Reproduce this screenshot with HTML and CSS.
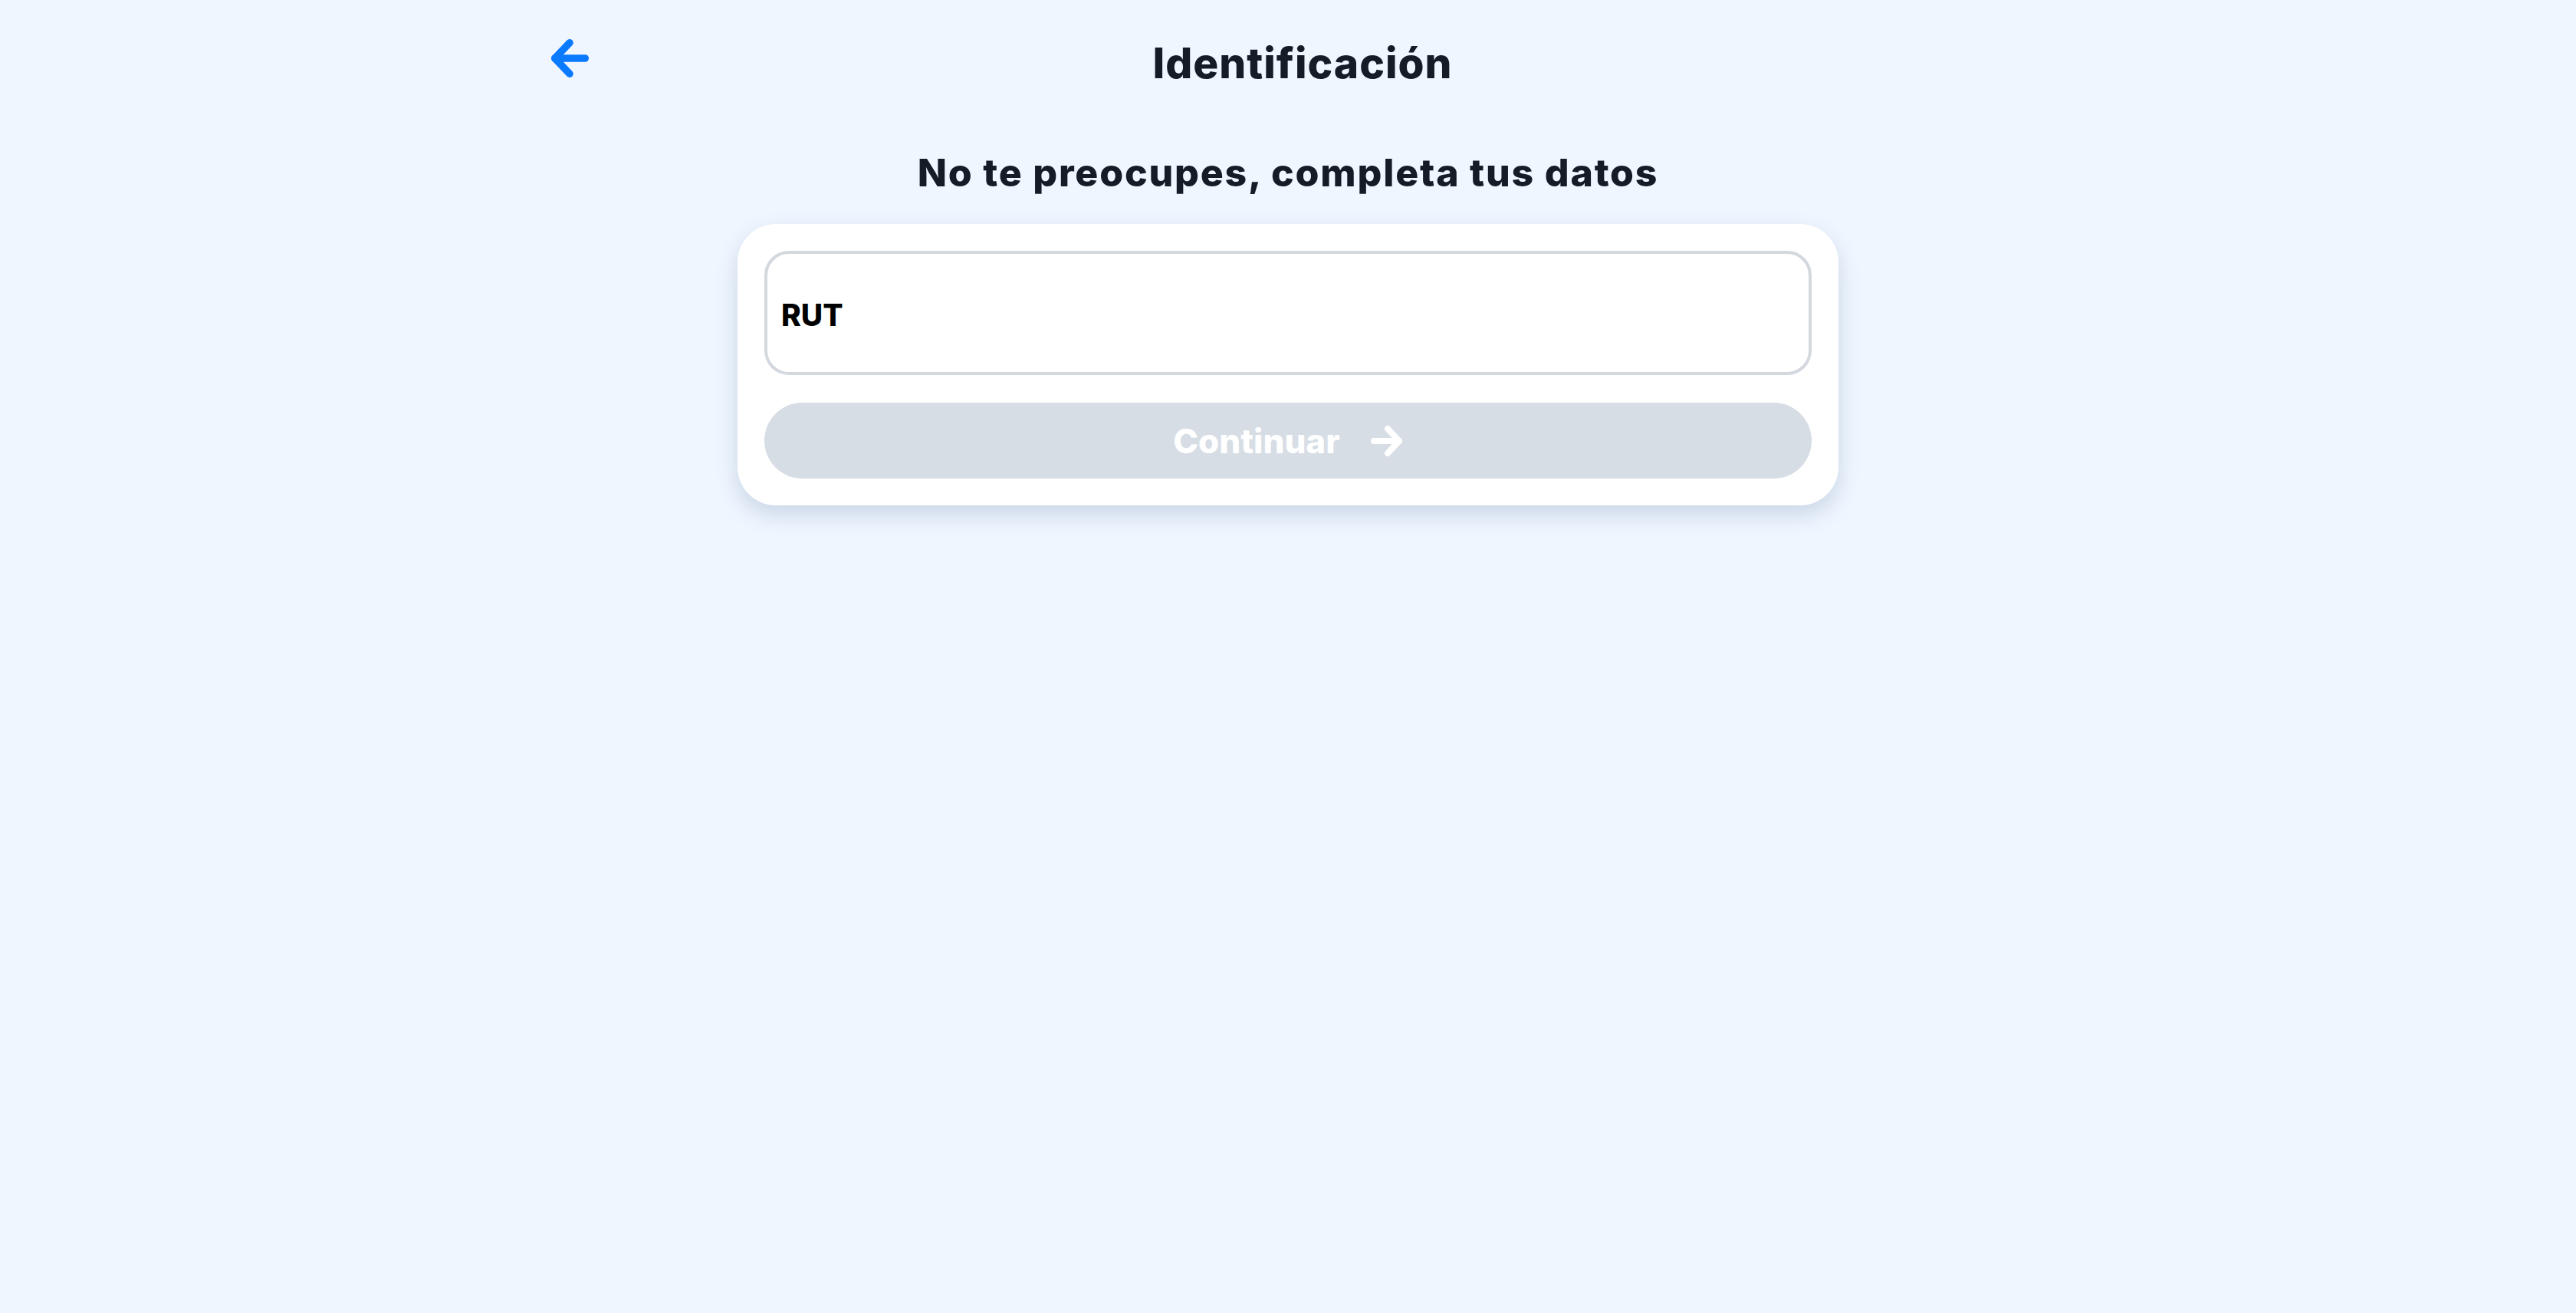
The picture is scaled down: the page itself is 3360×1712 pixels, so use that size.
FILE: index.html
```html
<!DOCTYPE html>
<html lang="es">
<head>
<meta charset="utf-8">
<title>Identificación</title>
<link rel="stylesheet" href="styles.css">
</head>
<body>
<div class="page">
  <header class="header">
    <button class="back" aria-label="Volver">
      <svg width="52" height="52" viewBox="0 0 52 52" fill="none" stroke="currentColor" stroke-width="10" stroke-linecap="round" stroke-linejoin="round">
        <path d="M26 5 L6 26 L26 47"/>
        <path d="M6 26 H47"/>
      </svg>
    </button>
    <h1 class="title">Identificación</h1>
  </header>
  <main class="main">
    <h2 class="subtitle">No te preocupes, completa tus datos</h2>
    <section class="card">
      <label class="field">
        <span class="field-label">RUT</span>
      </label>
      <button class="continue" disabled>
        <span>Continuar</span>
        <svg width="42" height="42" viewBox="0 0 42 42" fill="none" stroke="currentColor" stroke-width="8" stroke-linecap="round" stroke-linejoin="round">
          <path d="M4 21 H37"/>
          <path d="M22 5 L37 21 L22 37"/>
        </svg>
      </button>
    </section>
  </main>
</div>
</body>
</html>
```
FILE: styles.css
```css
* { box-sizing: border-box; }
html, body {
  margin: 0;
  padding: 0;
  background: #eff6ff;
}
body {
  font-family: Inter, "Noto Sans", Roboto, sans-serif;
  color: #151c27;
  min-height: 1712px;
}
.page {
  display: flex;
  flex-direction: column;
  align-items: center;
}
.header {
  width: 1944px;
  display: flex;
  align-items: flex-start;
  padding-top: 49px;
}
.back {
  width: 60px;
  flex: none;
  padding: 1px 0 0 10px;
  margin: 0;
  border: none;
  background: transparent;
  color: #0a7aff;
  display: flex;
  cursor: pointer;
}
.title {
  flex: 1;
  margin: 0;
  padding-right: 22px;
  text-align: center;
  font-size: 55px;
  line-height: 66px;
  font-weight: 800;
  letter-spacing: 1px;
}
.main {
  display: flex;
  flex-direction: column;
  align-items: center;
}
.subtitle {
  margin: 80px 0 0;
  font-size: 50px;
  line-height: 60px;
  font-weight: 800;
  letter-spacing: 1.8px;
  text-align: center;
}
.card {
  margin-top: 37px;
  width: 1436px;
  padding: 35px;
  background: #ffffff;
  border-radius: 50px;
  box-shadow: 0 12px 28px rgba(71, 98, 140, 0.22);
  display: flex;
  flex-direction: column;
  gap: 36px;
}
.field {
  height: 162px;
  border: 4px solid #d3d8df;
  border-radius: 32px;
  display: flex;
  align-items: center;
  padding: 4px 18px 0;
  background: #fff;
}
.field-label {
  font-size: 39px;
  font-weight: 800;
  color: #000;
}
.continue {
  height: 99px;
  border: none;
  border-radius: 50px;
  background: #d7dde5;
  color: #ffffff;
  font-family: inherit;
  font-size: 44px;
  font-weight: 800;
  display: flex;
  align-items: center;
  justify-content: center;
  gap: 40px;
  padding: 0;
}
.continue svg { display: block; }
```
